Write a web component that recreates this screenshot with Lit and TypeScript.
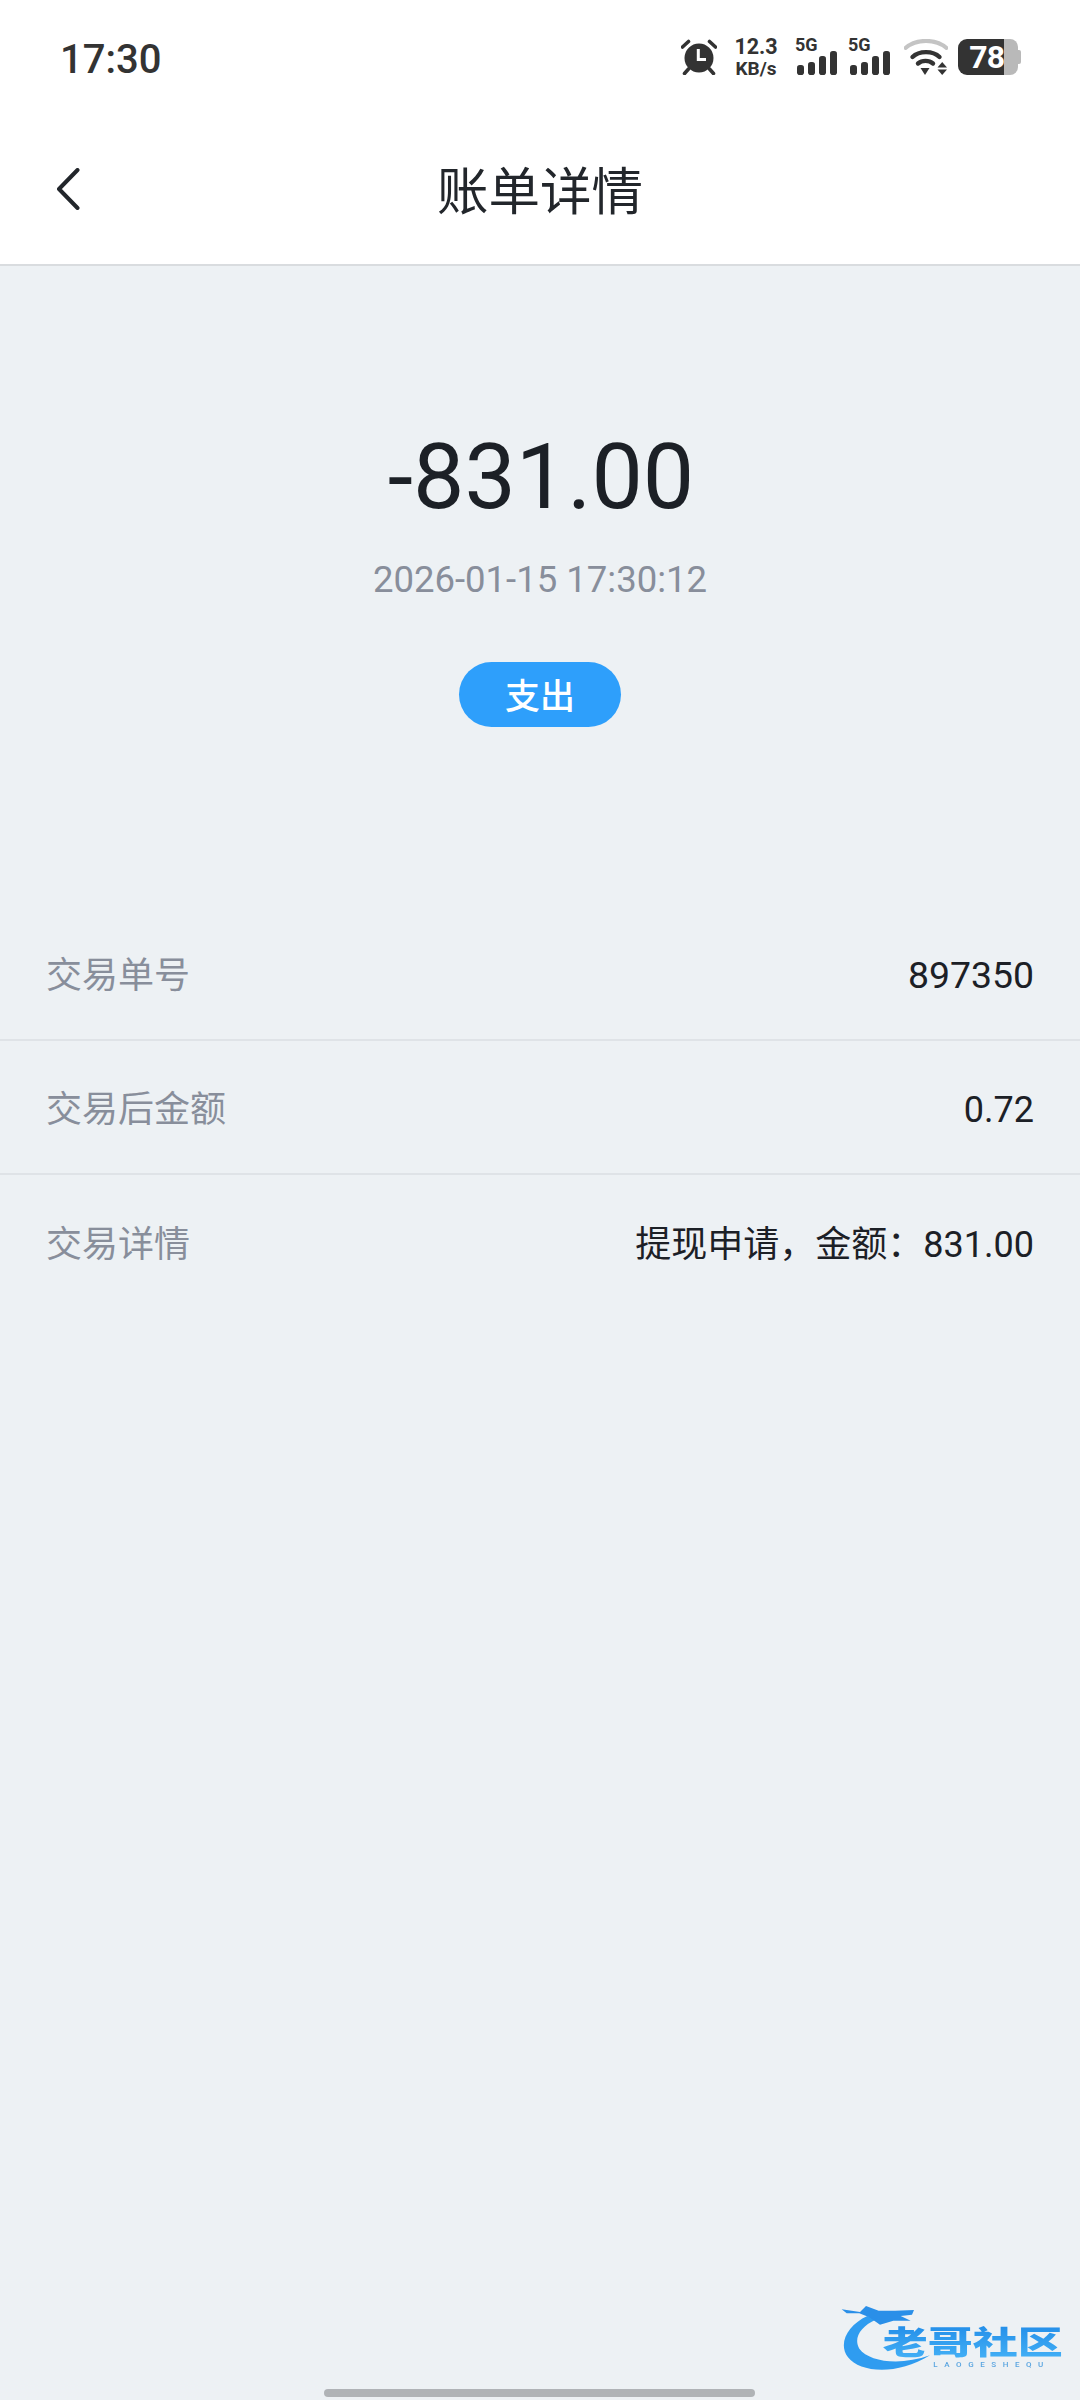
import { LitElement, css, html, svg } from "lit";
import { classMap } from "lit/directives/class-map.js";
import { customElement, property } from "lit/decorators.js";

const alarmIcon = svg`
  <svg class="alarm" viewBox="0 0 36 36" width="36" height="36">
    <circle cx="18" cy="19" r="14.500" fill="#333"></circle>
    <path d="M1.500 8 7.500 2.500M34.500 8 28.500 2.500M7.500 30 3.500 34.500M28.500 30 32.500 34.500" stroke="#333" stroke-width="3.600" stroke-linecap="round" fill="none"></path>
    <path d="M17.300 10V20.500H25" stroke="#fff" stroke-width="3" fill="none"></path>
  </svg>
`;

const signalIcon = svg`
  <svg viewBox="0 0 42 24" width="42" height="24">
    <rect x="2" y="14" width="7" height="10" rx="2.800" fill="#333"></rect>
    <rect x="13" y="11" width="7" height="13" rx="2.800" fill="#333"></rect>
    <rect x="24" y="5" width="7" height="19" rx="2.800" fill="#333"></rect>
    <rect x="35" y="0" width="7" height="24" rx="2.800" fill="#333"></rect>
  </svg>
`;

const wifiIcon = svg`
  <svg class="wifi" viewBox="0 0 44 36" width="44" height="36">
    <path d="M1.500 9C12 -.5 32 -.5 42.500 9" stroke="#c4c4c4" stroke-width="4" fill="none" stroke-linecap="round"></path>
    <path d="M8.500 18C15 11.500 29 11.500 35.500 18" stroke="#333" stroke-width="4.400" fill="none" stroke-linecap="round"></path>
    <path d="M14 24.500C18 21 25 21 29 24.500" stroke="#333" stroke-width="4.400" fill="none" stroke-linecap="round"></path>
    <path d="M16.500 29H25.500L21 36Z" fill="#333"></path>
    <path d="M33.500 28.500 38.200 23 43 28.500Z" fill="#333"></path>
    <path d="M33.500 30.500 38.200 36 43 30.500Z" fill="#333"></path>
  </svg>
`;

const backIcon = svg`
  <svg viewBox="0 0 24 42" width="24" height="42">
    <path d="M21.500 2 3 21 21.500 40" stroke="#22262b" stroke-width="4" fill="none" stroke-linecap="round" stroke-linejoin="round"></path>
  </svg>
`;

const logo = svg`
  <svg class="logo" viewBox="0 0 900 360" width="300" height="120">
    <defs>
      <linearGradient id="logo-fill" x1="0" y1="0" x2="0" y2="1">
        <stop offset="0" stop-color="#1c86e6"></stop>
        <stop offset="1" stop-color="#47b4f7"></stop>
      </linearGradient>
    </defs>
    <path d="M262 108C205 134 172 190 204 232 240 278 350 288 450 226 360 258 268 246 238 206 220 176 240 140 290 118Z" fill="#2f9cf0"></path>
    <path d="M185 88 240 96 258 78 296 92 345 92 402 90 396 104 362 108 392 122 340 122 300 134 268 112 238 100 200 100Z" fill="#2a8fe8"></path>
    <text x="308" y="222" class="logo-cn" fill="url(#logo-fill)" textLength="540" lengthAdjust="spacingAndGlyphs">老哥社区</text>
    <text x="460" y="260" class="logo-en" fill="#5aa5e0" textLength="330" lengthAdjust="spacing">LAOGESHEQU</text>
  </svg>
`;

@customElement("app-root")
export class AppRoot extends LitElement {
  @property({ type: Array }) rows = [
    { label: "交易单号", value: "897350", wide: true },
    { label: "交易后金额", value: "0.72", wide: false },
    { label: "交易详情", value: "提现申请，金额：831.00", wide: false }
  ];

  static styles = css`
    :host {
      display: block;
      position: relative;
      width: 1080px;
      height: 2400px;
      overflow: hidden;
      background: #edf1f4;
      color: #1c2026;
      font-family: Roboto, "Noto Sans CJK SC", sans-serif;
    }

    .top {
      background: #fff;
      border-bottom: 2px solid #d9dcdf;
    }

    .status {
      display: flex;
      align-items: center;
      justify-content: space-between;
      height: 114px;
      box-sizing: border-box;
      padding: 0 60px;
    }

    .time {
      margin-top: 6px;
      font-size: 40px;
      font-weight: 500;
      color: #333;
      line-height: 1;
    }

    .status-icons {
      display: flex;
      align-items: center;
      height: 36px;
      margin-right: -1px;
    }

    .alarm {
      display: block;
      margin-right: 16px;
    }

    .speed {
      width: 46px;
      margin-right: 16px;
      text-align: center;
      font-weight: 700;
      color: #333;
      line-height: 1;
    }
    .speed div:first-child {
      font-size: 21.500px;
      margin-bottom: 1px;
    }
    .speed div:last-child {
      font-size: 19px;
    }

    .sim {
      display: flex;
      flex-direction: column;
      width: 44px;
      height: 36px;
      margin-right: 9px;
    }
    .sim span {
      height: 12px;
      font-size: 18px;
      font-weight: 700;
      line-height: 12px;
      color: #333;
    }
    .sim svg {
      display: block;
    }

    .wifi {
      display: block;
      margin-left: 3px;
      margin-right: 10px;
    }

    .battery {
      display: flex;
      align-items: center;
      width: 63px;
      height: 36px;
    }
    .battery-used {
      display: flex;
      align-items: center;
      justify-content: flex-end;
      box-sizing: border-box;
      width: 46px;
      height: 36px;
      border-radius: 9px 0 0 9px;
      background: #333;
      color: #fff;
      font-size: 32px;
      font-weight: 700;
      letter-spacing: -1px;
      line-height: 1;
    }
    .battery-rest {
      width: 14px;
      height: 36px;
      border-radius: 0 8px 8px 0;
      background: #b9b9b9;
    }
    .battery-nub {
      width: 3px;
      height: 14px;
      border-radius: 0 2px 2px 0;
      background: #b9b9b9;
    }

    .nav {
      position: relative;
      display: flex;
      align-items: center;
      justify-content: center;
      height: 150px;
    }
    .back {
      position: absolute;
      left: 56px;
      top: 54px;
      display: block;
    }
    .back svg {
      display: block;
    }
    .title {
      margin-top: 7px;
      font-size: 51.500px;
      font-weight: 400;
      line-height: 1;
      color: #22262b;
    }

    .hero {
      display: flex;
      flex-direction: column;
      align-items: center;
      padding-top: 161px;
    }
    .amount {
      margin-left: 2px;
      font-size: 91.500px;
      line-height: 100px;
      color: #1c2026;
    }
    .date {
      margin-top: 28px;
      font-size: 36.500px;
      line-height: 50px;
      color: #888e9b;
    }
    .pill {
      display: flex;
      align-items: center;
      justify-content: center;
      box-sizing: border-box;
      width: 162px;
      height: 65px;
      margin-top: 57px;
      padding-top: 5px;
      border-radius: 33px;
      background: #2e9ffb;
      color: #fff;
      font-size: 35px;
      font-weight: 500;
      line-height: 1;
    }

    .rows {
      margin-top: 180px;
    }
    .row {
      display: flex;
      align-items: center;
      justify-content: space-between;
      box-sizing: border-box;
      height: 134px;
      padding: 6px 46px 0;
      border-bottom: 2px solid #dfe3e7;
      font-size: 36px;
      line-height: 1;
    }
    .row:last-child {
      border-bottom: 0;
    }
    .label {
      color: #888e9b;
    }
    .value {
      color: #1c2026;
    }
    .value.wide {
      font-size: 37.400px;
    }

    .logo {
      position: absolute;
      left: 780px;
      top: 2280px;
      display: block;
      filter: blur(0.6px);
    }
    .logo-cn {
      font-family: "Noto Sans CJK SC", sans-serif;
      font-size: 96px;
      font-weight: 900;
    }
    .logo-en {
      font-family: Roboto, sans-serif;
      font-size: 24px;
      font-weight: 500;
    }

    .home-bar {
      position: absolute;
      left: 324px;
      top: 2389px;
      width: 431px;
      height: 8px;
      border-radius: 4px;
      background: #b0b3b6;
    }
  `;

  render() {
    return html`
      <div class="top">
        <div class="status">
          <div class="time">17:30</div>
          <div class="status-icons">
            ${alarmIcon}
            <div class="speed">
              <div>12.3</div>
              <div>KB/s</div>
            </div>
            <div class="sim"><span>5G</span>${signalIcon}</div>
            <div class="sim"><span>5G</span>${signalIcon}</div>
            ${wifiIcon}
            <div class="battery">
              <div class="battery-used">78</div>
              <div class="battery-rest"></div>
              <div class="battery-nub"></div>
            </div>
          </div>
        </div>
        <div class="nav">
          <span class="back">${backIcon}</span>
          <div class="title">账单详情</div>
        </div>
      </div>
      <div class="hero">
        <div class="amount">-831.00</div>
        <div class="date">2026-01-15 17:30:12</div>
        <div class="pill">支出</div>
      </div>
      <div class="rows">
        ${this.rows.map(
          row => html`
            <div class="row">
              <span class="label">${row.label}</span>
              <span class=${classMap({ value: true, wide: row.wide })}>${row.value}</span>
            </div>
          `
        )}
      </div>
      ${logo}
      <div class="home-bar"></div>
    `;
  }
}
